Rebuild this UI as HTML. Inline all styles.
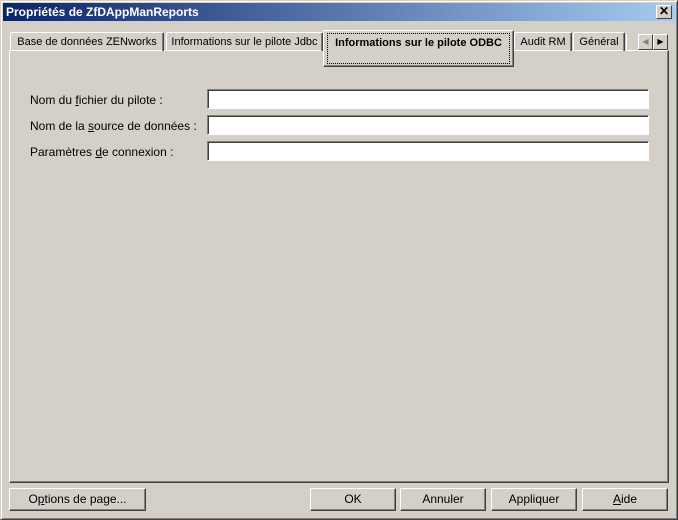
<!DOCTYPE html>
<html><head><meta charset="utf-8"><style>
*{margin:0;padding:0;box-sizing:border-box}
body{width:678px;height:520px;background:#d4d0c8;font-family:"Liberation Sans",Arial,sans-serif;font-size:12px;color:#000;position:relative;overflow:hidden}
.win{position:absolute;left:0;top:0;width:678px;height:520px;border:1px solid;border-color:#d4d0c8 #404040 #404040 #d4d0c8;box-shadow:inset 1px 1px #fff,inset -1px -1px #808080}
.title{position:absolute;left:3px;top:3px;width:672px;height:18px;background:linear-gradient(to right,#0a246a,#a6caf0);color:#fff;font-weight:bold;font-size:12px;line-height:18px;padding-left:3px;white-space:nowrap}
.close{position:absolute;left:656px;top:5px;width:16px;height:14px;background:#d4d0c8;border:1px solid;border-color:#fff #404040 #404040 #fff;font-size:12px;line-height:11px;text-align:center;font-weight:bold;color:#000}
.a{position:absolute;white-space:nowrap}
.tab{position:absolute;top:32px;height:19px;border:1px solid;border-bottom:none;border-color:#fff #404040 #fff #fff;border-radius:2px 2px 0 0;line-height:19px;text-align:center;box-shadow:inset -1px 0 #808080;white-space:nowrap;font-size:11px;overflow:hidden}
.panel{position:absolute;left:9px;top:50px;width:660px;height:433px;border:1px solid;border-color:#fff #404040 #404040 #fff;box-shadow:inset -1px -1px #808080}
.lbl{position:absolute;left:30px;white-space:nowrap}
.inp{position:absolute;left:207px;width:442px;height:20px;background:#fff;border:1px solid;border-color:#808080 #fff #fff #808080;box-shadow:inset 1px 1px #404040}
.btn{position:absolute;top:488px;height:23px;border:1px solid;border-color:#fff #404040 #404040 #fff;box-shadow:inset -1px -1px #808080;text-align:center;line-height:21px;white-space:nowrap}
u{text-decoration:underline}
</style></head><body>
<div class="win"></div>
<div class="title">Propriétés de ZfDAppManReports</div>
<div class="close">✕</div>
<div class="panel"></div>
<div class="tab" style="left:10px;width:154px">Base de données ZENworks</div>
<div class="tab" style="left:166px;width:157px">Informations sur le pilote Jdbc</div>
<div class="tab" style="left:514px;width:58px">Audit RM</div>
<div class="tab" style="left:573px;width:52px">Général</div>
<div class="a" style="left:626px;top:34px;width:4px;height:16px;border-left:1px solid #fff"></div>
<div class="a" style="left:323px;top:30px;width:191px;height:37px;background:#d4d0c8;border:1px solid;border-color:#fff #404040 #404040 #fff;border-radius:2px 2px 0 0;box-shadow:inset -1px -1px #808080"></div>
<div class="a" style="left:327px;top:33px;width:183px;height:31px;border:1px dotted #000;font-weight:bold;text-align:center;line-height:17px;padding-top:1px;font-size:11px;overflow:hidden">Informations sur le pilote ODBC</div>
<div class="a" style="left:638px;top:34px;width:15px;height:16px;border:1px solid;border-color:#fff #404040 #404040 #fff;font-size:8px;line-height:14px;text-align:center;color:#808080">◀</div>
<div class="a" style="left:653px;top:34px;width:15px;height:16px;border:1px solid;border-color:#fff #404040 #404040 #fff;font-size:8px;line-height:14px;text-align:center">▶</div>
<div class="lbl" style="top:93px">Nom du <u>f</u>ichier du pilote :</div>
<div class="lbl" style="top:119px">Nom de la <u>s</u>ource de données :</div>
<div class="lbl" style="top:145px">Paramètres <u>d</u>e connexion :</div>
<div class="inp" style="top:89px"></div>
<div class="inp" style="top:115px"></div>
<div class="inp" style="top:141px"></div>
<div class="btn" style="left:9px;width:137px">O<u>p</u>tions de page...</div>
<div class="btn" style="left:310px;width:86px">OK</div>
<div class="btn" style="left:400px;width:86px">Annuler</div>
<div class="btn" style="left:491px;width:86px">Appliquer</div>
<div class="btn" style="left:582px;width:86px"><u>A</u>ide</div>
</body></html>
